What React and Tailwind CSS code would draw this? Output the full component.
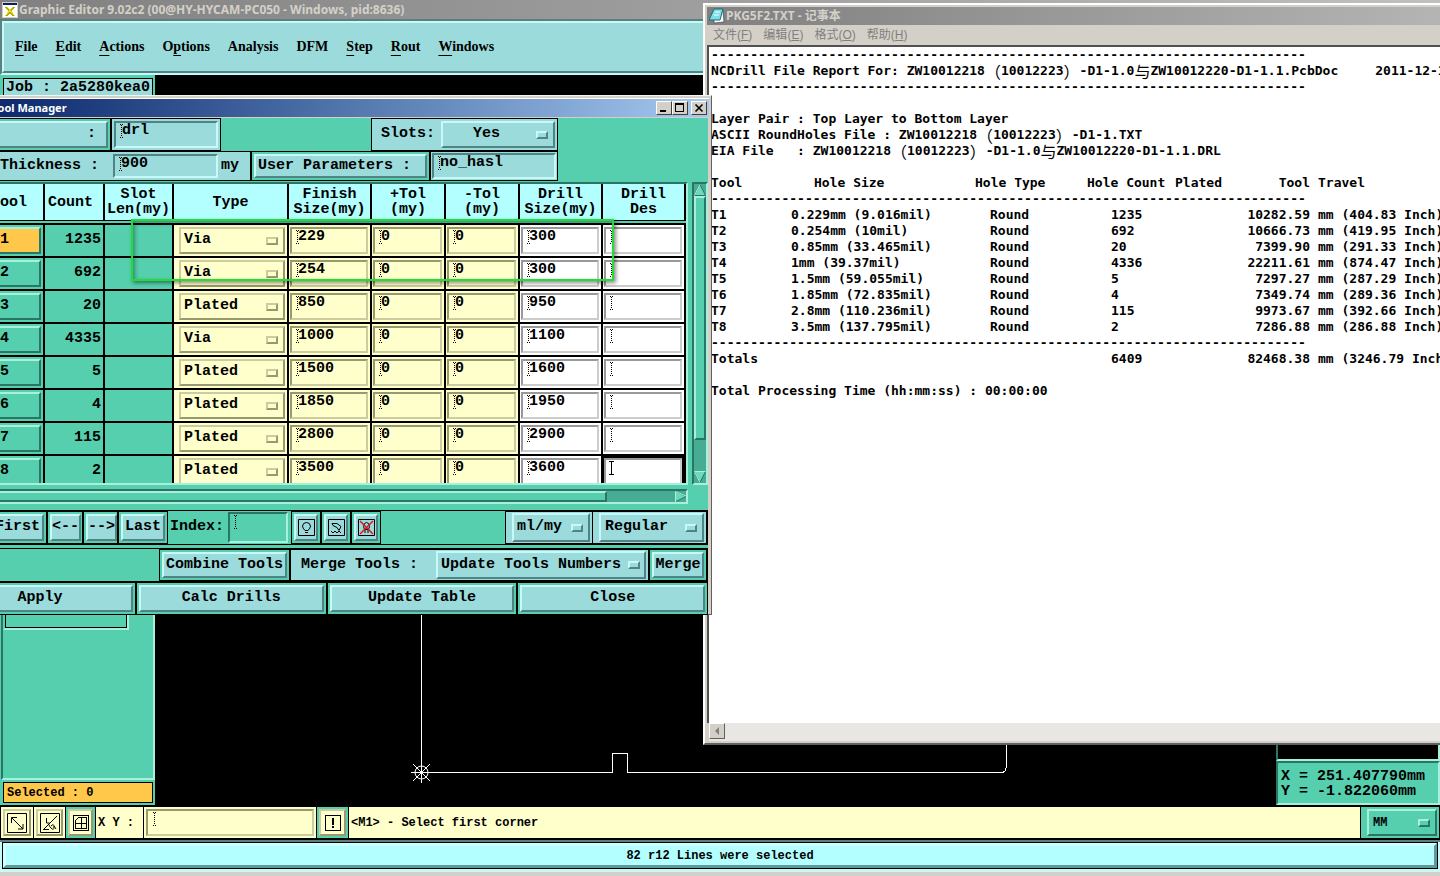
import React, { useState } from "react";

const MENU = [
  { key: "F", rest: "ile" },
  { key: "E", rest: "dit" },
  { key: "A", rest: "ctions" },
  { pre: "O", key: "p", rest: "tions" },
  { rest: "Analysis" },
  { rest: "DFM" },
  { key: "S", rest: "tep" },
  { key: "R", rest: "out" },
  { key: "W", rest: "indows" },
];

const TOOLS = [
  { id: 1, count: 1235, type: "Via", finish: 229, drill: 300 },
  { id: 2, count: 692, type: "Via", finish: 254, drill: 300 },
  { id: 3, count: 20, type: "Plated", finish: 850, drill: 950 },
  { id: 4, count: 4335, type: "Via", finish: 1000, drill: 1100 },
  { id: 5, count: 5, type: "Plated", finish: 1500, drill: 1600 },
  { id: 6, count: 4, type: "Plated", finish: 1850, drill: 1950 },
  { id: 7, count: 115, type: "Plated", finish: 2800, drill: 2900 },
  { id: 8, count: 2, type: "Plated", finish: 3500, drill: 3600 },
];

const REPORT = [
  ["T1", "0.229mm (9.016mil)", "1235", "10282.59", "mm (404.83 Inch)"],
  ["T2", "0.254mm (10mil)", "692", "10666.73", "mm (419.95 Inch)"],
  ["T3", "0.85mm (33.465mil)", "20", "7399.90", "mm (291.33 Inch)"],
  ["T4", "1mm (39.37mil)", "4336", "22211.61", "mm (874.47 Inch)"],
  ["T5", "1.5mm (59.055mil)", "5", "7297.27", "mm (287.29 Inch)"],
  ["T6", "1.85mm (72.835mil)", "4", "7349.74", "mm (289.36 Inch)"],
  ["T7", "2.8mm (110.236mil)", "115", "9973.67", "mm (392.66 Inch)"],
  ["T8", "3.5mm (137.795mil)", "2", "7286.88", "mm (286.88 Inch)"],
];

const DASHES = "-".repeat(76);

// bevels: [light top/left, dark bottom/right] and the reverse
const RAISED = "border-2 border-t-[#c8f8f8] border-l-[#c8f8f8] border-b-[#508484] border-r-[#508484]";
const SUNKEN = "border-2 border-t-[#508484] border-l-[#508484] border-b-[#c8f8f8] border-r-[#c8f8f8]";
const GREEN_RAISED = "border-2 border-t-[#a8f0dc] border-l-[#a8f0dc] border-b-[#2a7563] border-r-[#2a7563]";
const GREEN_SUNKEN = "border-2 border-t-[#2a7563] border-l-[#2a7563] border-b-[#a8f0dc] border-r-[#a8f0dc]";
const CREAM_SUNKEN = "border-2 border-t-[#999970] border-l-[#999970] border-b-[#cccca0] border-r-[#cccca0]";
const CREAM_RAISED = "border-2 border-t-[#cccca0] border-l-[#cccca0] border-b-[#999970] border-r-[#999970]";
const WHITE_SUNKEN = "border-2 border-t-[#999999] border-l-[#999999] border-b-[#cccccc] border-r-[#cccccc]";

function Beam({ solid }) {
  return (
    <svg width="5" height="16" viewBox="0 0 5 16" className="shrink-0" aria-hidden="true" shapeRendering="crispEdges">
      {solid ? (
        <path d="M0 1.500h5M2.500 1v14M0 14.500h5" stroke="#000" />
      ) : (
        <path
          d="M1 1h1v1H1zM3 1h1v1H3zM2 2h1v1H2zM2 4h1v1H2zM2 6h1v1H2zM2 8h1v1H2zM2 10h1v1H2zM2 12h1v1H2zM1 14h1v1H1zM3 14h1v1H3z"
          fill="#000"
        />
      )}
    </svg>
  );
}

function Field({ label, value, className, solid, id }) {
  const [text, setText] = useState(value);
  return (
    <div className={"flex items-start pl-[3px] " + className}>
      <Beam solid={solid} />
      <input
        id={id}
        aria-label={label}
        value={text}
        onChange={(e) => setText(e.target.value)}
        className="-ml-[2px] h-4 w-0 min-w-0 flex-1 bg-transparent leading-4 outline-none"
      />
    </div>
  );
}

function Option({ label, value, options, className, select, knob, id }) {
  return (
    <div className={"relative flex items-center " + className}>
      <select
        id={id}
        aria-label={label}
        defaultValue={value}
        className={"h-full w-full appearance-none bg-transparent outline-none " + select}
      >
        {(options || [value]).map((o) => (
          <option key={o}>{o}</option>
        ))}
      </select>
      <span className={"pointer-events-none absolute h-2 w-3 " + knob} />
    </div>
  );
}

// coloured push button inside its green surround
function Push({ children, className, inner }) {
  return (
    <div className={"flex border border-black bg-[#55cfae] p-[2px] " + className}>
      <button type="button" className={"flex flex-1 items-center justify-center whitespace-nowrap bg-[#9bdbdb] " + RAISED + " " + (inner || "")}>
        {children}
      </button>
    </div>
  );
}

function WinButtons() {
  const btn =
    "flex h-[14px] w-4 items-center justify-center border border-t-white border-l-white border-b-[#404040] border-r-[#404040] bg-[#d4d0c8]";
  return (
    <div className="flex">
      <button type="button" aria-label="Minimize" className={btn}>
        <svg width="10" height="10" shapeRendering="crispEdges"><path d="M1 8h6" stroke="#000" strokeWidth="2" /></svg>
      </button>
      <button type="button" aria-label="Maximize" className={btn}>
        <svg width="10" height="10" shapeRendering="crispEdges">
          <path d="M.5 1.500h8v7h-8z" fill="none" stroke="#000" /><path d="M0 1h9" stroke="#000" strokeWidth="2" />
        </svg>
      </button>
      <button type="button" aria-label="Close" className={btn + " ml-[3px]"}>
        <svg width="10" height="10"><path d="M1.500 1.500l7 7M8.500 1.500l-7 7" stroke="#000" strokeWidth="1.600" /></svg>
      </button>
    </div>
  );
}

function EditorHeader() {
  return (
    <header className="shrink-0">
      <div className="flex h-[19px] items-center bg-linear-to-r from-[#808080] to-[#c0c0c0] pr-[3px] pl-[2px]">
        <svg width="16" height="16" viewBox="0 0 16 16" shapeRendering="crispEdges" aria-hidden="true">
          <path d="M0 0h16v16H0z" fill="#d4d0c8" />
          <path d="M1 3h14v12H1z" fill="#fff" />
          <path d="M1 1h14v2H1z" fill="#0a1a70" />
          <path d="M4 5l8 9M12 5l-8 9" stroke="#b8a800" strokeWidth="2" />
          <path d="M5 5l8 9M11 5l-8 9" stroke="#e8dc20" />
        </svg>
        <h1 className="ml-px flex-1 whitespace-nowrap font-['Noto_Sans',sans-serif] text-[12px] leading-4 font-bold text-[#d4d0c8]">
          Graphic Editor 9.02c2 (00@HY-HYCAM-PC050 - Windows, pid:8636)
        </h1>
        <WinButtons />
      </div>
      <nav className="flex h-14 border-y-2 border-l-2 border-t-[#5a8080] border-l-[#5a8080] border-b-[#c8f8f8] bg-[#9bdbdb] font-['Liberation_Serif',serif] text-[14px] font-bold">
        <div className="flex w-full items-center gap-[18px] border-2 border-r-0 border-t-[#c8f8f8] border-l-[#c8f8f8] border-b-[#508484] pb-[2px] pl-[11px]">
          {MENU.map((m) => (
            <button type="button" key={m.rest}>
              {m.pre}
              {m.key && <span className="underline underline-offset-4">{m.key}</span>}
              {m.rest}
            </button>
          ))}
        </div>
      </nav>
    </header>
  );
}

function Drawing() {
  return (
    <svg className="h-full min-w-0 flex-1" aria-label="Board outline" fill="none" stroke="#fff">
      <path d="M266.500 20V697.500H457.500V678.500H472.500V697.500H846q5 0 5-5V600" shapeRendering="crispEdges" />
      <circle cx="266.500" cy="697.500" r="6.500" />
      <path d="M256 697.500h21M266.500 687v21M258 689l17 17M275 689l-17 17" />
    </svg>
  );
}

function EditorBody() {
  return (
    <main className="flex min-h-0 flex-1 bg-black font-['Liberation_Mono',monospace] font-bold">
      <aside className="flex w-[155px] shrink-0 flex-col bg-[#55cfae] pt-px text-[15px]">
        <div className="mr-[2px] ml-[3px] mt-[2px] h-[22px] border border-black bg-[#9bdbdb] pl-[2px] whitespace-pre leading-[18px]">
          Job : 2a5280kea0
        </div>
        <div className={"mt-1 ml-[1px] flex-1 " + GREEN_SUNKEN}>
          <div className="h-[524px] w-[126px] border-2 border-t-0 border-b-[#a8f0dc] border-l-[#55cfae] border-r-[#a8f0dc]">
            <div className="h-full border border-black" />
          </div>
        </div>
        <div className="mr-[2px] ml-[3px] mt-[2px] mb-[2px] h-[21px] border border-black bg-[#ffc84b] pl-[3px] text-[12px] leading-[20px]">
          Selected : 0
        </div>
        <div className="h-px bg-black" />
      </aside>
      <div className="flex flex-1 overflow-hidden">
        <Drawing />
      </div>
      <div className="flex w-[164px] shrink-0 flex-col justify-end">
        <div className={"flex-1 bg-black " + GREEN_SUNKEN} />
        <div className={"mb-px h-[44px] bg-[#55cfae] pt-[6px] pl-[3px] text-[15px] leading-[15px] whitespace-nowrap " + GREEN_SUNKEN}>
          <p>X = 251.407790mm</p>
          <p>Y = -1.822060mm</p>
        </div>
      </div>
    </main>
  );
}

function StatusRow() {
  return (
    <footer className="shrink-0 font-['Liberation_Mono',monospace] text-[12px] font-bold">
      <div className="flex h-[34px] gap-px bg-black p-px pb-[2px]">
        <button type="button" aria-label="Zoom area" className="w-8 bg-[#ffffcc] p-[2px]">
          <span className={"flex h-full items-center justify-center " + CREAM_RAISED}>
            <svg width="20" height="20" fill="none" stroke="#000">
              <path d="M.5.5h19v19H.5zM5 5l11 11M4.500 10V4.500H10M11 16h5v-5" />
            </svg>
          </span>
        </button>
        <button type="button" aria-label="Snap angle" className="w-[31px] bg-[#ffffcc] p-[2px]">
          <span className={"flex h-full items-center justify-center " + CREAM_RAISED}>
            <svg width="20" height="20" fill="none" stroke="#000">
              <path d="M.5.5h19v19H.5zM3 17L17 3M3 16.500h6M6.500 5v5h3M11 13q3-3 3 1t-3 1-1-3M14 13l2 3" />
            </svg>
          </span>
        </button>
        <button type="button" aria-label="Grid" className="w-[29px] bg-[#55cfae] p-[2px]">
          <span className={"flex h-full items-center justify-center bg-[#ffffcc] " + CREAM_RAISED}>
            <svg width="16" height="16" fill="none" stroke="#000" shapeRendering="crispEdges">
              <path d="M.5.5h15v15H.5zM5.500 2.500H13v11H2.500V5.500zM8.500 3v10M3 8.500h10" />
            </svg>
          </span>
        </button>
        <label htmlFor="xy" className="flex w-[47px] items-center bg-[#ffffcc] pl-[2px] whitespace-pre">
          X Y :
        </label>
        <div className="w-[172px] bg-[#ffffcc] p-[2px]">
          <div className={"flex h-full pl-1 " + CREAM_SUNKEN}>
            <Beam />
            <input id="xy" className="w-0 flex-1 bg-transparent outline-none" />
          </div>
        </div>
        <button type="button" aria-label="Alert" className="w-[31px] bg-[#55cfae] p-[2px]">
          <span className={"flex h-full items-center justify-center bg-[#ffffcc] " + CREAM_RAISED}>
            <svg width="16" height="16" fill="none" stroke="#000" shapeRendering="crispEdges">
              <path d="M.5.5h15v15H.5z" />
              <path d="M8 3v7M8 11v2" strokeWidth="2" />
            </svg>
          </span>
        </button>
        <p className="flex flex-1 items-center bg-[#ffffcc] pl-[2px]">&lt;M1&gt; - Select first corner</p>
        <div className="w-[78px] bg-[#55cfae] py-[2px] pr-[2px] pl-[6px]">
          <Option label="Units" value="MM" options={["MM", "INCH"]} className={"h-full " + GREEN_RAISED} select="pl-1" knob={"right-[5px] " + GREEN_RAISED} />
        </div>
      </div>
      <div className="border-t-2 border-[#5a8080] bg-[#c8f8f8] px-[2px] pb-[3px]">
        <div className="border border-black">
          <p className="flex h-[25px] items-center justify-center border-[3px] border-t-[#ccffff] border-l-[#ccffff] border-b-[#5f9a9a] border-r-[#5f9a9a] bg-[#b3ffff]">
            82 r12 Lines were selected
          </p>
        </div>
      </div>
      <div className="h-[4px] bg-[#d4d0c8]" />
    </footer>
  );
}

function Wide({ children }) {
  return (
    <span className="inline-block h-4 align-top font-['Noto_Sans_CJK_SC',sans-serif] text-[16px] leading-4 font-normal">
      {children}
    </span>
  );
}

function Notepad() {
  const menu = [["文件", "F"], ["编辑", "E"], ["格式", "O"], ["帮助", "H"]];
  return (
    <section className="absolute top-[3px] -right-4 left-[703px] flex h-[742px] flex-col overflow-hidden border-2 border-t-white border-l-white border-b-[#606060] border-r-[#606060] bg-[#d4d0c8] p-[2px]">
      <div className="flex h-[18px] items-center bg-linear-to-r from-[#808080] to-[#b5b5b5] pl-[2px]">
        <svg width="16" height="16" viewBox="0 0 16 16" aria-hidden="true">
          <path d="M5 3h9l1 11-10 1z" fill="#fff" stroke="#333" strokeWidth=".6" />
          <path d="M5 1h9l-3 11H0z" fill="#7fdde6" stroke="#156a78" />
          <path d="M6 4h5M5 7h5" stroke="#fff" />
        </svg>
        <h2 className="ml-px font-['Noto_Sans','Noto_Sans_CJK_SC',sans-serif] text-[12px] leading-4 font-bold text-[#d4d0c8]">
          PKG5F2.TXT - 记事本
        </h2>
      </div>
      <nav className="flex h-5 items-center gap-[11px] pl-[6px] font-['Liberation_Sans','Noto_Sans_CJK_SC',sans-serif] text-[12px] leading-5 text-[#808080]">
        {menu.map(([name, key]) => (
          <button type="button" key={key}>
            {name}(<span className="underline">{key}</span>)
          </button>
        ))}
      </nav>
      <article className="flex-1 overflow-hidden border-t-2 border-l-2 border-[#505050] bg-white pl-[2px] font-['DejaVu_Sans_Mono',monospace] text-[13px] font-bold leading-4 whitespace-pre text-black">
        <p className="h-4">{DASHES}</p>
        <p className="flex h-4 gap-[37px]">
          <span>
            NCDrill File Report For: ZW10012218<Wide>（</Wide>10012223<Wide>）</Wide>-D1-1.0<Wide>与</Wide>ZW10012220-D1-1.1.PcbDoc
          </span>
          <span>2011-12-13</span>
        </p>
        <p className="mb-4 h-4">{DASHES}</p>
        <p className="h-4">Layer Pair : Top Layer to Bottom Layer</p>
        <p className="h-4">
          ASCII RoundHoles File : ZW10012218<Wide>（</Wide>10012223<Wide>）</Wide>-D1-1.TXT
        </p>
        <p className="mb-4 h-4">
          EIA File   : ZW10012218<Wide>（</Wide>10012223<Wide>）</Wide>-D1-1.0<Wide>与</Wide>ZW10012220-D1-1.1.DRL
        </p>
        <table className="w-[770px] table-fixed">
          <colgroup>
            <col className="w-[80px]" />
            <col className="w-[184px]" />
            <col className="w-[112px]" />
            <col className="w-[88px]" />
            <col className="w-[48px]" />
            <col className="w-[87px]" />
            <col />
          </colgroup>
          <thead>
            <tr className="h-4 text-left">
              <th>Tool</th>
              <th className="pl-[23px]">Hole Size</th>
              <th>Hole Type</th>
              <th>Hole Count</th>
              <th>Plated</th>
              <th className="text-right">Tool</th>
              <th className="pl-2">Travel</th>
            </tr>
            <tr className="h-4">
              <td colSpan={7}>{DASHES}</td>
            </tr>
          </thead>
          <tbody>
            {REPORT.map(([tool, size, count, travel, inch]) => (
              <tr key={tool} className="h-4">
                <td>{tool}</td>
                <td>{size}</td>
                <td className="pl-[15px]">Round</td>
                <td className="pl-6">{count}</td>
                <td />
                <td className="text-right">{travel}</td>
                <td className="pl-2">{inch}</td>
              </tr>
            ))}
          </tbody>
          <tfoot>
            <tr className="h-4">
              <td colSpan={7}>{DASHES}</td>
            </tr>
            <tr className="h-4">
              <td colSpan={3}>Totals</td>
              <td className="pl-6">6409</td>
              <td colSpan={2} className="text-right">82468.38</td>
              <td className="pl-2">mm (3246.79 Inch)</td>
            </tr>
          </tfoot>
        </table>
        <p className="mt-4">Total Processing Time (hh:mm:ss) : 00:00:00</p>
      </article>
      <div className="ml-[2px] flex h-[18px] bg-[#e9e7e3]">
        <button
          type="button"
          aria-label="Scroll left"
          className="flex h-[16px] w-4 items-center justify-center border border-t-white border-l-white border-b-[#606060] border-r-[#606060] bg-[#d4d0c8]"
        >
          <svg width="6" height="8"><path d="M5 0v8L1 4z" fill="#808080" /></svg>
        </button>
      </div>
    </section>
  );
}

function ToolTable() {
  const th = "border-r-2 border-black bg-[#b3ffff] p-0 leading-[15px] ";
  const td = "border-r-2 border-b-2 border-black p-0";
  const heads = ["Slot\nLen(my)", "Type", "Finish\nSize(my)", "+Tol\n(my)", "-Tol\n(my)", "Drill\nSize(my)", "Drill\nDes"];
  return (
    <div className="h-[299px] overflow-hidden">
      <table className="w-[706px] table-fixed border-separate border-spacing-0">
        <colgroup>
          <col className="w-[65px]" />
          <col className="w-[60px]" />
          <col className="w-[69px]" />
          <col className="w-[115px]" />
          <col className="w-[83px]" />
          <col className="w-[74px]" />
          <col className="w-[74px]" />
          <col className="w-[83px]" />
          <col className="w-[83px]" />
        </colgroup>
        <thead>
          <tr className="h-[36px] whitespace-pre">
            <th className={th + "text-right"}><span className="pr-4">Tool</span></th>
            <th className={th + "text-left"}><span className="pl-[3px]">Count</span></th>
            {heads.map((h) => (
              <th key={h} className={th + "text-center"}>{h}</th>
            ))}
          </tr>
          <tr className="h-[5px]">
            <td colSpan={9} className="border-t border-b-2 border-black bg-[#55cfae] p-0 leading-[0px]" />
          </tr>
        </thead>
        <tbody>
          {TOOLS.map((t) => (
            <tr key={t.id} className="h-[33px]">
              <td className={td + " pr-[2px]"}>
                <button
                  type="button"
                  className={"block h-[27px] w-full pl-[18px] text-left " + GREEN_RAISED + (t.id === 1 ? " bg-[#ffc84b]" : "")}
                >
                  {t.id}
                </button>
              </td>
              <td className={td + " pr-[2px] text-right"}>{t.count}</td>
              <td className={td} />
              <td className={td + " bg-[#ffffcc] pr-[2px] pl-[5px]"}>
                <Option
                  label={"Type of tool " + t.id}
                  value={t.type}
                  options={["Via", "Plated"]}
                  className={"h-[27px] " + CREAM_RAISED}
                  select="pl-[3px]"
                  knob={"right-[5px] " + CREAM_RAISED}
                />
              </td>
              <td className={td + " bg-[#ffffcc] pr-[2px] pl-px"}>
                <Field label={"Finish size " + t.id} value={t.finish} className={"h-[27px] " + CREAM_SUNKEN} />
              </td>
              <td className={td + " bg-[#ffffcc] pr-[2px] pl-px"}>
                <Field label={"Plus tolerance " + t.id} value="0" className={"h-[27px] " + CREAM_SUNKEN} />
              </td>
              <td className={td + " bg-[#ffffcc] pr-[2px] pl-px"}>
                <Field label={"Minus tolerance " + t.id} value="0" className={"h-[27px] " + CREAM_SUNKEN} />
              </td>
              <td className={td + " bg-white pr-[2px] pl-px"}>
                <Field label={"Drill size " + t.id} value={t.drill} className={"h-[27px] " + WHITE_SUNKEN} />
              </td>
              <td className={td + " pr-[2px] pl-px " + (t.id === 8 ? "bg-black" : "bg-white")}>
                <Field label={"Drill designator " + t.id} value="" solid={t.id === 8} className={"h-[27px] bg-white " + WHITE_SUNKEN} />
              </td>
            </tr>
          ))}
        </tbody>
      </table>
    </div>
  );
}

function ToolManager() {
  const knob = RAISED + " right-[5px]";
  return (
    <section className="absolute top-[95px] -left-[21px] w-[733px] border border-t-[#f4f4f0] border-b-[#606060] border-r-[#606060] bg-[#d4d0c8] p-[2px] pb-[3px] pl-0 font-['Liberation_Mono',monospace] text-[15px] font-bold">
      <div className="flex h-[19px] items-center justify-between border-t border-white bg-linear-to-r from-[#0a246a] to-[#a6caf0] pr-[2px] pl-[12px]">
        <h2 className="font-['Noto_Sans',sans-serif] text-[11px] leading-4 text-white">Tool Manager</h2>
        <WinButtons />
      </div>
      <div className="mr-px border-t border-[#d4d0c8] bg-[#55cfae]">
        <div className="flex h-[33px]">
          <Push className="w-[131px]" inner="justify-end pr-[10px]">:</Push>
          <div className="w-[110px] border border-black bg-[#9bdbdb] p-[2px]">
            <Field label="Layer" value="drl" className={"h-full " + SUNKEN} />
          </div>
          <div className="ml-[150px] flex w-[187px] items-center border border-black bg-[#9bdbdb] p-[2px]">
            <label htmlFor="slots" className="w-[67px] pl-[7px]">Slots:</label>
            <Option id="slots" value="Yes" options={["Yes", "No"]} className={"h-full flex-1 " + RAISED} select="pl-[30px]" knob={knob} />
          </div>
        </div>
        <div className="flex h-[30px]">
          <div className="flex w-[271px] items-center border border-l-0 border-black bg-[#9bdbdb] pl-5">
            <label htmlFor="thick" className="w-[113px]">Thickness :</label>
            <Field id="thick" value="900" className={"h-6 w-[105px] " + SUNKEN} />
            <span className="pl-[3px]">my</span>
          </div>
          <Push className="w-[179px]" inner="justify-start pl-[2px]">User Parameters :</Push>
          <div className="w-[128px] border border-black bg-[#9bdbdb] p-px">
            <Field label="User parameters" value="no_hasl" className={"h-full " + SUNKEN} />
          </div>
        </div>
        <div className="flex pt-[1px]">
          <div>
            <div className="border-y-2 border-r-2 border-t-[#2a7563] border-r-[#a8f0dc] border-b-[#a8f0dc]">
              <ToolTable />
            </div>
            <div className="mt-1 flex h-[15px] items-center border-2 border-l-0 border-t-[#2a7563] border-b-[#a8f0dc] border-r-[#a8f0dc] bg-[#46ac93]">
              <div className={"h-full w-[627px] bg-[#55cfae] " + GREEN_RAISED} />
              <svg className="ml-auto" width="11" height="11">
                <path d="M0 0v11l11-5.500z" fill="#6cd8bc" stroke="#2a7563" />
                <path d="M.5 11V.5L11 5" fill="none" stroke="#a8f0dc" />
              </svg>
            </div>
          </div>
          <div className={"ml-1 flex h-[303px] w-[16px] flex-col items-center bg-[#46ac93] " + GREEN_SUNKEN}>
            <svg width="12" height="12">
              <path d="M6 .5L11.500 11.500H.5z" fill="#6cd8bc" stroke="#2a7563" />
              <path d="M6 .5L.5 11.500" stroke="#a8f0dc" />
            </svg>
            <div className={"h-[244px] w-full bg-[#55cfae] " + GREEN_RAISED} />
            <svg className="mt-auto" width="12" height="12">
              <path d="M.5.5h11L6 11.500z" fill="#6cd8bc" stroke="#2a7563" />
              <path d="M11.500.5H.5L6 11.500" fill="none" stroke="#a8f0dc" />
            </svg>
          </div>
        </div>
        <div className="mt-[6px] flex h-[35px] border border-black">
          <Push className="w-[66px] border-l-0" inner="justify-end pr-[2px]">First</Push>
          <Push className="w-[36px]">&lt;--</Push>
          <Push className="w-[35px]">--&gt;</Push>
          <Push className="w-[50px]">Last</Push>
          <label htmlFor="index" className="flex w-[60px] items-center pl-[2px]">Index:</label>
          <div className="w-[63px] py-px pr-[3px]">
            <Field id="index" value="" className={"h-full " + GREEN_SUNKEN} />
          </div>
          <Push className="w-[30px]">
            <svg width="17" height="17" fill="none" stroke="#000">
              <path d="M.5.5h16v16H.5z" />
              <path d="M7 11.500Q4.500 9 4.500 7 5 3.500 8.500 3.500 12 3.500 12.500 7 12.500 9 10 11.500zM7 13.500h3" />
            </svg>
          </Push>
          <Push className="w-[30px]">
            <svg width="17" height="17" fill="none" stroke="#000">
              <path d="M.5.5h16v16H.5z" />
              <path d="M4 4.500h5l4 3-2 4-2-3-4-2zM3 12l2 2 2-2 2 2 2-2 2 2" />
            </svg>
          </Push>
          <Push className="w-[30px]">
            <svg width="17" height="17" fill="none" stroke="#000">
              <path d="M.5.5h16v16H.5z" />
              <path d="M6.500 10.500q-2-3 0-6 2-2 4 0 2 3 0 6zM7 11v3M10 11v3" />
              <path d="M2 2l13 13M15 2L2 15" stroke="#e01818" strokeWidth="1.500" />
            </svg>
          </Push>
          <div className="flex-1" />
          <div className="w-[88px] border border-black bg-[#9bdbdb] py-px pr-[2px] pl-[6px]">
            <Option label="Display units" value="ml/my" className={"h-full " + RAISED} select="pl-[3px]" knob={knob} />
          </div>
          <div className="w-[114px] border border-l-0 border-black bg-[#9bdbdb] py-px pr-[2px] pl-[6px]">
            <Option label="Mode" value="Regular" className={"h-full " + RAISED} select="pl-1" knob={knob} />
          </div>
        </div>
        <div className="mt-[3px] flex h-[34px] border border-black">
          <div className="w-[178px]" />
          <Push className="w-[131px]">Combine Tools</Push>
          <div className="flex flex-1 items-center border border-black bg-[#9bdbdb] py-px pr-[2px] pl-[10px]">
            <label htmlFor="merge" className="w-[135px] whitespace-nowrap">Merge Tools :</label>
            <Option
              id="merge"
              value="Update Tools Numbers"
              className={"h-full flex-1 " + RAISED}
              select="pl-[3px]"
              knob={RAISED + " right-1"}
            />
          </div>
          <Push className="w-[58px]">Merge</Push>
        </div>
        <div className="grid h-[29px] grid-cols-[156px_1fr_1fr_1fr]">
          <Push inner="pr-9">Apply</Push>
          <Push>Calc Drills</Push>
          <Push>Update Table</Push>
          <Push>Close</Push>
        </div>
      </div>
    </section>
  );
}

export default function App() {
  return (
    <div className="relative flex h-screen flex-col overflow-hidden bg-black text-black">
      <EditorHeader />
      <EditorBody />
      <StatusRow />
      <Notepad />
      <ToolManager />
      {/* highlight over the first two tool rows */}
      <div className="pointer-events-none absolute top-[219px] left-[131px] h-[62px] w-[483px] border-2 border-[#22dd33] shadow-[2px_2px_4px_rgba(0,0,0,0.45),inset_2px_2px_4px_rgba(0,0,0,0.35)]" />
    </div>
  );
}
